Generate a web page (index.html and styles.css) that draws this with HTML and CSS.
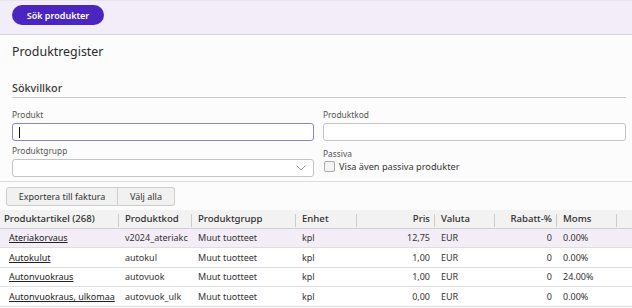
FILE: index.html
```html
<!DOCTYPE html>
<html lang="sv">
<head>
<meta charset="utf-8">
<link rel="stylesheet" href="styles.css">
</head>
<body>
<div class="topbar">
  <button class="primary">Sök produkter</button>
</div>
<div class="page">
  <h1 class="title">Produktregister</h1>
  <h2 class="section">Sökvillkor</h2>
  <div class="form">
    <div class="field">
      <label class="lbl">Produkt</label>
      <div class="input focused"><span class="caret"></span></div>
    </div>
    <div class="field">
      <label class="lbl">Produktkod</label>
      <div class="input"></div>
    </div>
    <div class="field">
      <label class="lbl">Produktgrupp</label>
      <div class="input select">
        <svg class="chev" width="10" height="6" viewBox="0 0 10 6"><path d="M0.5 0.5 L5 5 L9.5 0.5" fill="none" stroke="#9a9a9a" stroke-width="1"/></svg>
      </div>
    </div>
    <div class="field">
      <label class="lbl lbl-p">Passiva</label>
      <div class="check-row"><span class="checkbox"></span><span class="check-text">Visa även passiva produkter</span></div>
    </div>
  </div>
</div>
<div class="divider"></div>
<div class="actions">
  <button class="btn">Exportera till faktura</button><button class="btn">Välj alla</button>
</div>
<table class="grid">
  <colgroup>
    <col class="w120"><col class="w73"><col class="w104"><col class="w61"><col class="w78"><col class="w60"><col class="w62"><col class="w60"><col>
  </colgroup>
  <thead>
    <tr>
      <th class="c1">Produktartikel (268)</th>
      <th>Produktkod</th>
      <th>Produktgrupp</th>
      <th>Enhet</th>
      <th class="num">Pris</th>
      <th>Valuta</th>
      <th class="num">Rabatt-%</th>
      <th>Moms</th>
      <th class="last"></th>
    </tr>
  </thead>
  <tbody>
    <tr class="sel">
      <td class="c1"><a href="#">Ateriakorvaus</a></td><td>v2024_ateriakc</td><td>Muut tuotteet</td><td>kpl</td><td class="num">12,75</td><td>EUR</td><td class="num">0</td><td>0.00%</td><td></td>
    </tr>
    <tr>
      <td class="c1"><a href="#">Autokulut</a></td><td>autokul</td><td>Muut tuotteet</td><td>kpl</td><td class="num">1,00</td><td>EUR</td><td class="num">0</td><td>0.00%</td><td></td>
    </tr>
    <tr>
      <td class="c1"><a href="#">Autonvuokraus</a></td><td>autovuok</td><td>Muut tuotteet</td><td>kpl</td><td class="num">1,00</td><td>EUR</td><td class="num">0</td><td>24.00%</td><td></td>
    </tr>
    <tr>
      <td class="c1"><a href="#">Autonvuokraus, ulkomaa</a></td><td>autovuok_ulk</td><td>Muut tuotteet</td><td>kpl</td><td class="num">0,00</td><td>EUR</td><td class="num">0</td><td>0.00%</td><td></td>
    </tr>
  </tbody>
</table>
</body>
</html>
```

FILE: styles.css
```css
* { box-sizing: border-box; }
html, body { margin: 0; padding: 0; }
body {
  background: #fcfcfc;
  font-family: "Noto Sans", "Open Sans", sans-serif;
  color: #333;
  width: 632px;
  height: 308px;
  overflow: hidden;
}
.topbar {
  height: 35px;
  background: #f3ecf9;
  border-top: 1px solid #e9e3ef;
  border-bottom: 1px solid #d8d4dc;
  padding: 4px 0 0 12px;
}
.primary {
  display: block;
  height: 20px;
  width: 92px;
  border: none;
  border-radius: 10px;
  background: #4b25c0;
  color: #fff;
  font-family: inherit;
  font-size: 9px;
  font-weight: 600;
  padding: 0;
}
.page { padding: 0 6px 0 12px; }
.title {
  margin: 0;
  padding-top: 7px;
  height: 32px;
  font-size: 12.4px;
  line-height: 20px;
  font-weight: 400;
  color: #2b2b2b;
}
.section {
  margin: 0;
  height: 31px;
  padding-top: 13px;
  font-size: 10.8px;
  line-height: 16px;
  font-weight: 500;
  color: #3a3a3a;
  border-bottom: 1px solid #c9c9c9;
}
.form {
  display: grid;
  grid-template-columns: 302px 303px;
  column-gap: 9px;
  padding-top: 9px;
}
.field { display: flex; flex-direction: column; }
.lbl {
  font-size: 8.4px;
  line-height: 15px;
  color: #555;
  height: 16px;
}
.lbl-p { margin-top: 3px; }
.input {
  height: 18px;
  border: 1px solid #c4c4c4;
  border-radius: 3px;
  background: #fff;
  margin-bottom: 2px;
  position: relative;
  display: flex;
  align-items: center;
}
.input.focused { border-color: #8f84c9; }
.caret { display: block; width: 1px; height: 11px; background: #111; margin-left: 6px; }
.select { justify-content: flex-end; padding-right: 7px; }
.chev { display: block; }
.check-row { display: flex; align-items: center; height: 13px; margin-top: -2px; }
.checkbox {
  width: 11px; height: 11px;
  border: 1px solid #aaa;
  border-radius: 2px;
  background: #f4f4f4;
  margin-left: 1px;
}
.check-text { font-size: 9.2px; margin-left: 4px; color: #333; line-height: 13px; }
.divider { height: 1px; background: #dcdcdc; margin-top: 2px; }
.actions { display: flex; padding: 5px 0 0 6px; height: 28px; }
.btn {
  height: 19px;
  background: #f1f1f1;
  border: 1px solid #cdcdcd;
  font-family: inherit;
  font-size: 9px;
  color: #333;
  padding: 0;
}
.btn:first-child { width: 112px; border-radius: 3px 0 0 3px; }
.btn:last-child { width: 57px; border-left: none; border-radius: 0 3px 3px 0; }
.w120 { width: 120px; }
.w73 { width: 73px; }
.w104 { width: 104px; }
.w61 { width: 61px; }
.w78 { width: 78px; }
.w60 { width: 60px; }
.w62 { width: 62px; }
.grid {
  width: 632px;
  table-layout: fixed;
  border-collapse: collapse;
  font-size: 9px;
}
.grid th {
  height: 18px;
  background: #f2f2f2;
  font-weight: 500;
  font-size: 9.6px;
  text-align: left;
  padding: 0 4px 0 5px;
  border-bottom: 1px solid #d0d0d0;
  position: relative;
  white-space: nowrap;
  overflow: hidden;
  color: #2e2e2e;
}
.grid th::after {
  content: "";
  position: absolute;
  right: 1px;
  top: 4px;
  bottom: 1px;
  width: 1px;
  background: #cbcbcb;
}
.grid th.last::after { display: none; }
.grid th.c1 { padding-left: 4px; }
.grid td {
  height: 19.5px;
  padding: 0 4px 0 5px;
  border-bottom: 1px solid #dedede;
  background: #fff;
  white-space: nowrap;
  overflow: hidden;
  text-overflow: clip;
  color: #333;
}
.grid td.c1 { padding-left: 9px; }
.grid .num { text-align: right; padding-right: 6px; }
.grid tr.sel td { background: #f3edf8; }
.grid a { color: #222; text-decoration: underline; }
```
